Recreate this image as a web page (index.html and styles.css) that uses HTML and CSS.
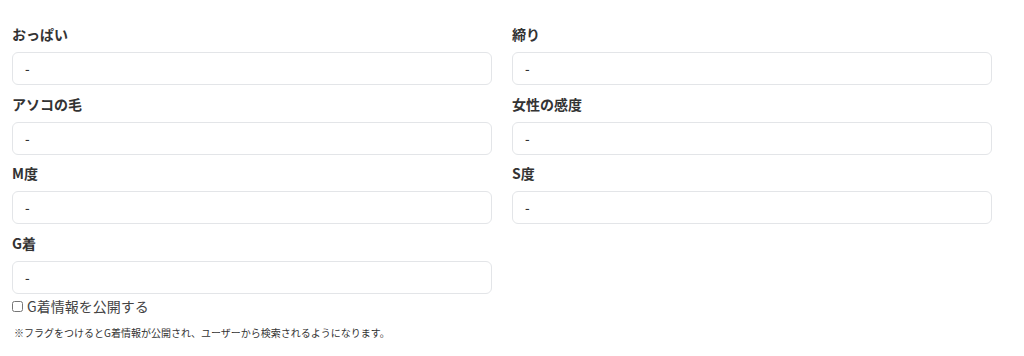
FILE: index.html
```html
<!DOCTYPE html>
<html lang="ja">
  <head>
    <meta charset="UTF-8">
    <meta name="viewport" content="width=device-width, initial-scale=1.0">
    <title>プロフィール</title>
    <link rel="stylesheet" href="styles.css">
  </head>
  <body>
    <form class="profile-form">
      <div class="form-grid">
        <div class="field">
          <label class="field-label" for="f1">おっぱい</label>
          <input class="field-input" id="f1" type="text" value="-">
        </div>
        <div class="field">
          <label class="field-label" for="f2">締り</label>
          <input class="field-input" id="f2" type="text" value="-">
        </div>
        <div class="field">
          <label class="field-label" for="f3">アソコの毛</label>
          <input class="field-input" id="f3" type="text" value="-">
        </div>
        <div class="field">
          <label class="field-label" for="f4">女性の感度</label>
          <input class="field-input" id="f4" type="text" value="-">
        </div>
        <div class="field">
          <label class="field-label" for="f5">M度</label>
          <input class="field-input" id="f5" type="text" value="-">
        </div>
        <div class="field">
          <label class="field-label" for="f6">S度</label>
          <input class="field-input" id="f6" type="text" value="-">
        </div>
        <div class="field">
          <label class="field-label" for="f7">G着</label>
          <input class="field-input" id="f7" type="text" value="-">
          <label class="check-row">
            <input type="checkbox" class="check-box">
            <span>G着情報を公開する</span>
          </label>
        </div>
      </div>
      <p class="note">※フラグをつけるとG着情報が公開され、ユーザーから検索されるようになります。</p>
    </form>
  </body>
</html>
```

FILE: styles.css
```css
:root {
  --text-color: #333333;
  --muted-text: #444444;
  --border-color: #e3e5e8;
  --border-radius: 6px;
}

* {
  margin: 0;
  padding: 0;
  box-sizing: border-box;
}

body {
  font-family: "Noto Sans CJK JP", "Noto Sans", sans-serif;
  color: var(--text-color);
  background: #ffffff;
}

.profile-form {
  width: 980px;
  margin-left: 12px;
  padding-top: 24px;
}

.form-grid {
  display: grid;
  grid-template-columns: 480px 480px;
  column-gap: 20px;
  row-gap: 8.7px;
}

.field {
  display: flex;
  flex-direction: column;
}

.field-label {
  font-size: 14px;
  font-weight: 700;
  line-height: 20px;
  margin-bottom: 8px;
}

.field-input {
  height: 33px;
  width: 100%;
  border: 1px solid var(--border-color);
  border-radius: var(--border-radius);
  padding: 0 12px;
  font-family: inherit;
  font-size: 13px;
  font-weight: 500;
  color: var(--text-color);
  outline: none;
}

.check-row {
  display: flex;
  align-items: center;
  gap: 4px;
  height: 24px;
  font-size: 14px;
  color: var(--muted-text);
}

.check-box {
  width: 11px;
  height: 11px;
  margin: 0;
}

.note {
  margin-top: 7px;
  margin-left: 2px;
  font-size: 10px;
  line-height: 16px;
  color: var(--text-color);
}
```
